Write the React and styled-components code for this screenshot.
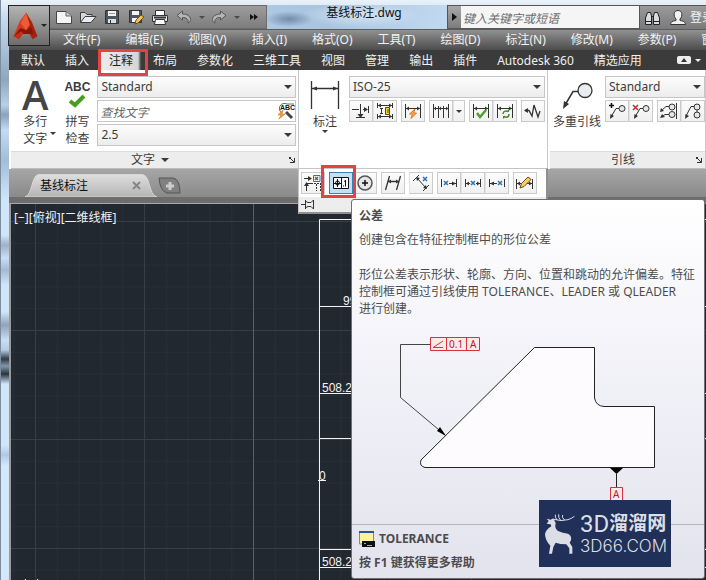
import React from "react";
import styled, { createGlobalStyle } from "styled-components";

const GlobalStyle = createGlobalStyle`
	* {
		box-sizing: border-box;
	}
	body {
		margin: 0;
		font-family: "Noto Sans", "Noto Sans CJK SC", sans-serif;
		font-size: 12px;
		line-height: 16px;
		color: #3c3c3c;
	}
	button, input, select {
		font: inherit;
		color: inherit;
		margin: 0;
		padding: 0;
		border: 0;
		background: none;
	}
	svg {
		display: block;
		flex: none;
	}
`;

const Frame = styled.div`
	position: relative;
	display: flex;
	flex-direction: column;
	min-height: 100vh;
	overflow: hidden;
	padding: 5px 0 0 8px;
	border-left: 1px solid #7d8da0;
	background: linear-gradient(
		#e9f2f9 0, #c3d9ec 20px, #8fa6bd 80px, #b9d0e6 105px, #8ba3bb 115px,
		#c4dcf2 130px, #a3bdd8 160px, #cfe5fa 200px, #cfe5fa 235px, #9eb2c8 245px,
		#c8def4 258px, #a5bad2 270px, #cfe5fa 285px, #cfe5fa 312px, #8fa3b9 325px,
		#c8def4 340px, #b4cbe2 350px, #2f3946 359px, #8496aa 366px, #2a333e 374px,
		#cfe5fa 384px, #cfe5fa 445px, #b0c9e3 455px, #d4e8fb 466px, #d4e8fb 100%
	);
`;

/* title bar */

const AppButton = styled.button`
	position: absolute;
	top: 5px;
	left: 7px;
	z-index: 2;
	display: flex;
	align-items: center;
	gap: 3px;
	width: 42px;
	height: 41px;
	padding-left: 4px;
	border: 1px solid #222;
	background: linear-gradient(#b4b4b4, #6d6d6d);
`;

const TitleBar = styled.header`
	display: flex;
	height: 24px;
	padding-left: 41px;
	background: linear-gradient(90deg, #c5dcf1 0, #a9c4e0 45%, #c4dcf2 65%, #cfe3f5 100%);
`;

const QuickAccess = styled.div`
	display: flex;
	align-items: center;
	padding: 0 0 0 2px;
	border: 1px solid #6b6b6b;
	border-left: 0;
	background: linear-gradient(#9d9d9d, #7c7c7c);
`;

const QuickButton = styled.button`
	display: flex;
	align-items: center;
	justify-content: center;
	width: ${(p) => (p.$narrow ? 11 : 24)}px;
	height: 20px;
`;

const DocTitle = styled.h1`
	flex: 180 1 0;
	margin: 0;
	padding-left: 14px;
	font-size: 12px;
	font-weight: 400;
	line-height: 16px;
	text-align: center;
	color: #111;
	white-space: nowrap;
	background:
		radial-gradient(ellipse 24px 8px at 22px 14px, rgba(70, 90, 115, 0.55), transparent),
		radial-gradient(ellipse 60px 12px at 52% 10px, rgba(225, 238, 250, 0.7), transparent);
`;

const SearchBox = styled.div`
	flex: 193 1 0;
	display: flex;
	border: 1px solid #565656;
`;

const SearchToggle = styled.button`
	display: flex;
	align-items: center;
	justify-content: center;
	width: 13px;
	background: linear-gradient(#a8a8a8, #7c7c7c);
`;

const SearchInput = styled.input`
	flex: 1;
	min-width: 0;
	padding: 3px 2px 0;
	background: #f5f5f5;
	font-style: italic;
	&::placeholder {
		color: #6c6c6c;
		opacity: 1;
	}
`;

const Account = styled.div`
	flex: 0 0 66px;
	display: flex;
	align-items: center;
	gap: 8px;
	padding-left: 4px;
	overflow: hidden;
	color: #f4f4f4;
	white-space: nowrap;
	background: linear-gradient(#9a9a9a, #7a7a7a);
	border-top: 1px solid #565656;
`;

const AccountButton = styled.button`
	display: flex;
	align-items: center;
	flex: none;
	gap: 3px;
`;

/* menu and ribbon tabs */

const MenuBar = styled.nav`
	display: flex;
	gap: 25px;
	height: 21px;
	padding-left: 54px;
	overflow: hidden;
	border-top: 1px solid #5c5c5c;
	background: linear-gradient(#919191, #4c4c4c);
`;

const MenuItem = styled.button`
	flex: none;
	color: #f1f1f1;
	white-space: nowrap;
`;

const TabBar = styled.nav`
	display: flex;
	align-items: stretch;
	height: 20px;
	padding-left: 2px;
	background: #3b3b3b;
`;

const RibbonTab = styled.button`
	position: relative;
	flex: none;
	padding: 2px 10px 0;
	color: ${(p) => (p.$active ? "#222" : "#f1f1f1")};
	background: ${(p) => (p.$active ? "linear-gradient(90deg, transparent 2px, #ececec 2px, #d5d5d5 39px, #3b3b3b 42px)" : "none")};
	white-space: nowrap;
`;

const Marker = styled.span`
	position: absolute;
	inset: ${(p) => p.$inset};
	z-index: 3;
	border: 3px solid #e04545;
	pointer-events: none;
`;

const TabToggle = styled.button`
	display: flex;
	align-items: center;
	gap: 4px;
	margin: 0 5px 0 auto;
`;

/* ribbon panels */

const Ribbon = styled.main`
	display: grid;
	grid-template-columns: 290fr 249fr 158fr;
	min-height: 98px;
	background: #fff;
`;

const Panel = styled.section`
	position: relative;
	display: flex;
	flex-direction: column;
	min-width: 0;
	border-right: 1px solid #c9c9c9;
`;

const PanelBody = styled.div`
	flex: 1;
	display: flex;
	padding: 6px ${(p) => p.$right ?? 2}px 4px ${(p) => p.$left}px;
	gap: ${(p) => p.$gap}px;
`;

const PanelTitle = styled.footer`
	display: flex;
	align-items: center;
	justify-content: center;
	height: 18px;
	margin-left: 2px;
	border-top: 1px solid #dcdcdc;
	border-bottom: 1px solid #bdbdbd;
	background: #ededed;
`;

const TitleText = styled.button`
	display: flex;
	align-items: center;
	gap: 6px;
	margin: 0 auto;
`;

const Launcher = styled.button`
	padding-right: 3px;
`;

const BigButtons = styled.div`
	display: flex;
	gap: 16px;
`;

const BigButton = styled.button`
	display: flex;
	flex-direction: column;
	align-items: center;
	align-self: flex-start;
	flex: none;
	line-height: 17px;
	white-space: nowrap;
`;

const BigIcon = styled.span`
	display: flex;
	flex-direction: column;
	align-items: center;
	justify-content: center;
	height: 37px;
`;

const BigLetter = styled.span`
	font-family: "Open Sans", sans-serif;
	font-size: 40px;
	font-weight: 600;
	line-height: 36px;
	color: #454545;
`;

const Abc = styled.span`
	font-family: "Liberation Sans", Arial, sans-serif;
	font-size: 12px;
	font-weight: 700;
	line-height: 12px;
`;

const LabelRow = styled.span`
	position: relative;
`;

const CornerArrow = styled.span`
	position: absolute;
	left: 100%;
	top: 2px;
	padding-left: 3px;
`;

const Fields = styled.div`
	flex: 1;
	min-width: 0;
	display: flex;
	flex-direction: column;
	gap: 2px;
`;

const Field = styled.label`
	position: relative;
	display: flex;
	align-items: center;
	height: 22px;
	border: 1px solid #c6c6c6;
	background: ${(p) => (p.$plain ? "#fff" : "linear-gradient(#fdfdfd, #ececec)")};
`;

const Select = styled.select`
	flex: 1;
	min-width: 0;
	height: 20px;
	padding: 0 20px 0 3px;
	appearance: none;
`;

const TextInput = styled.input`
	flex: 1;
	min-width: 0;
	padding: 3px 2px 0;
	font-style: italic;
	&::placeholder {
		color: #666;
		opacity: 1;
	}
`;

const FieldArrow = styled.span`
	position: absolute;
	right: 3px;
	pointer-events: none;
`;

const ToolRow = styled.div`
	display: flex;
	gap: 4px;
`;

const ToolGroup = styled.div`
	display: flex;
`;

const Tool = styled.button`
	position: relative;
	display: flex;
	align-items: center;
	justify-content: center;
	width: ${(p) => (p.$narrow ? 12 : 24)}px;
	height: 22px;
	border: 1px solid ${(p) => (p.$active ? "#3a7fb5" : "#cbcbcb")};
	background: ${(p) => (p.$active ? "#c3e0f5" : "linear-gradient(#fcfcfc, #f0f0f0)")};
	& + & {
		border-left-color: #e2e2e2;
	}
`;

const Flyout = styled.div`
	position: absolute;
	top: 98px;
	left: -1px;
	right: -1px;
	z-index: 2;
	border: 1px solid #c4c4c4;
	border-right: 2px solid #8f8f8f;
	border-bottom: 2px solid #8f8f8f;
	background: #fff;
`;

const FlyoutTools = styled(ToolRow)`
	padding: 3px 2px;
`;

const FlyoutFoot = styled.div`
	height: 15px;
	padding: 1px 2px;
	background: #ededed;
`;

/* document tabs */

const FileBar = styled.div`
	display: flex;
	align-items: flex-end;
	height: 34px;
	padding-left: 16px;
	border-bottom: 6px solid #6d6d6d;
	background: linear-gradient(#a6a6a6, #8a8a8a);
`;

const FileTab = styled.div`
	position: relative;
	display: flex;
	align-items: center;
	justify-content: space-between;
	width: 132px;
	height: 23px;
	padding: 0 16px 0 15px;
	color: #111;
`;

const TabShape = styled.svg`
	position: absolute;
	inset: 0;
`;

const TabContent = styled.button`
	position: relative;
`;

const NewTab = styled.button`
	margin: 0 0 2px 1px;
`;

/* drawing area */

const Canvas = styled.section`
	position: relative;
	flex: 1;
	border-top: 1px solid #a8a8a8;
	border-left: 2px solid #9a9a9a;
	background: #212830;
`;

const Drawing = styled.svg`
	position: absolute;
	inset: 0;
	font-family: "Liberation Sans", Arial, sans-serif;
	font-size: 12px;
`;

const ViewLabel = styled.div`
	position: relative;
	padding: 6px 3px;
	color: #f2f2f2;
`;

/* tooltip */

const Tip = styled.aside`
	position: absolute;
	top: 30px;
	left: 52px;
	z-index: 4;
	width: 354px;
	border: 1px solid #6f6f76;
	border-radius: 3px;
	background: linear-gradient(#fff, #f3f3f9 40%, #e3e3ee);
	color: #4c4c4c;
`;

const TipText = styled.div`
	padding: 7px 7px 0;
`;

const TipTitle = styled.h2`
	margin: 0 0 7px;
	font-size: 12px;
	line-height: 17px;
`;

const TipLine = styled.p`
	margin: 0 0 18px;
	line-height: 17px;
	&:last-child {
		margin: 0;
	}
`;

const NoWrap = styled.span`
	white-space: nowrap;
`;

const TipFigure = styled.svg`
	margin: 9px 0 0 38px;
	font-size: 10px;
`;

const TipFoot = styled.footer`
	margin-top: 23px;
	padding: 5px 7px 7px;
	border-top: 1px solid #b5b5c2;
	font-weight: 700;
`;

const Command = styled.div`
	display: flex;
	align-items: center;
	gap: 4px;
	margin-bottom: 7px;
	line-height: 18px;
`;

const Watermark = styled.div`
	position: absolute;
	right: 33px;
	bottom: 11px;
	display: flex;
	align-items: center;
	gap: 4px;
	width: 132px;
	height: 67px;
	padding-left: 5px;
	background: #203058;
	color: #dcdee6;
	white-space: nowrap;
`;

const MarkTop = styled.div`
	display: flex;
	align-items: center;
	font-family: Roboto, "Noto Sans CJK SC", sans-serif;
	font-size: 24px;
	line-height: 24px;
`;

const MarkHan = styled.span`
	font-size: 19px;
	font-weight: 700;
`;

const MarkSite = styled.div`
	font-family: Inter, "Liberation Sans", sans-serif;
	font-size: 17px;
	font-weight: 300;
	line-height: 20px;
`;

const menus = ["文件(F)", "编辑(E)", "视图(V)", "插入(I)", "格式(O)", "工具(T)", "绘图(D)", "标注(N)", "修改(M)", "参数(P)", "窗口(W)"];
const tabs = ["默认", "插入", "注释", "布局", "参数化", "三维工具", "视图", "管理", "输出", "插件", "Autodesk 360", "精选应用"];

const Down = ({ size = 8, color = "#3a3a3a" }) => (
	<svg width={size} height={size / 2} viewBox="0 0 8 4">
		<path d="M0 0H8L4 4Z" fill={color} />
	</svg>
);

const Glyph = ({ w = 20, h = 18, children }) => (
	<svg width={w} height={h} viewBox={`0 0 ${w} ${h}`} fill="none" stroke="#333" strokeWidth="1">
		{children}
	</svg>
);

const LauncherIcon = () => (
	<Glyph w={6} h={6}>
		<path d="M0 0.5H2M0.5 0V2M1 1L5 5M5.5 1V5.5H1" />
	</Glyph>
);

const quick = {
	new: (
		<Glyph>
			<path d="M2.500 3.500H12L17.500 8V15.500H2.500Z" fill="#f4f4f4" stroke="#444" />
			<path d="M12 3.500V8H17.500" fill="#ccc" stroke="#666" />
		</Glyph>
	),
	open: (
		<Glyph>
			<path d="M2.500 14.500V4.500H7L9 6.500H14V8.500" fill="#d8d8d8" stroke="#3d3d3d" />
			<path d="M2.500 14.500L7 8.500H18L13 14.500Z" fill="#e8edf3" stroke="#3d3d3d" />
		</Glyph>
	),
	save: (
		<Glyph>
			<path d="M3.500 2.500H16.500V15.500H3.500Z" fill="#4d5660" stroke="#2f353b" />
			<path d="M6 3H14V8H6Z" fill="#f4f4f4" stroke="none" />
			<path d="M7 5.500H13" stroke="#999" />
			<path d="M6 11H14V15H6Z" fill="#ddd" stroke="none" />
			<path d="M8.500 12V15" />
		</Glyph>
	),
	saveAs: (
		<Glyph>
			<path d="M3.500 2.500H15.500V14.500H3.500Z" fill="#4d5660" stroke="#2f353b" />
			<path d="M6 3H13V7H6ZM6 10H12V14H6Z" fill="#f4f4f4" stroke="none" />
			<path d="M9 16L10 12L15 7L18 9L12 15Z" fill="#f0c25a" stroke="#7a4d12" />
		</Glyph>
	),
	print: (
		<Glyph>
			<path d="M5.500 2.500H14.500V8H5.500Z" fill="#fff" />
			<path d="M2.500 7.500H17.500V13.500H2.500Z" fill="#e2e2e2" />
			<path d="M5.500 11.500H14.500L15.500 16.500H4.500Z" fill="#fff" />
			<path d="M4 9.500H16" strokeWidth="2" />
		</Glyph>
	),
	undo: (
		<Glyph>
			<path d="M3 7.500L8.500 3V6C13 6 16.500 8 16.500 11.500C16.500 13 15.500 14.500 14 15C15 11 12 9.500 8.500 9.500V12Z" fill="#b5b5b5" stroke="#555" />
		</Glyph>
	),
	redo: (
		<Glyph>
			<path d="M17 7.500L11.500 3V6C7 6 3.500 8 3.500 11.500C3.500 13 4.500 14.500 6 15C5 11 8 9.500 11.500 9.500V12Z" fill="#b5b5b5" stroke="#555" />
		</Glyph>
	),
	more: (
		<Glyph w={10} h={8}>
			<path d="M1 1L5 4L1 7ZM5 1L9 4L5 7Z" fill="#111" stroke="none" />
		</Glyph>
	),
};

// a dimension bar: two end ticks and a line with arrow heads
const Bar = ({ x1 = 2, x2 = 17, y = 6, top = 2, bottom = 16 }) => (
	<>
		<path d={`M${x1 + 0.5} ${top}V${bottom}M${x2 + 0.5} ${top}V${bottom}M${x1} ${y + 0.5}H${x2}`} />
		<path d={`M${x1 + 1} ${y + 0.5}l3-2v4zM${x2} ${y + 0.5}l-3-2v4z`} fill="#333" stroke="none" />
	</>
);

const Cross = ({ x, y, s = 5, color = "#2f74b5" }) => (
	<path d={`M${x} ${y}l${s} ${s}M${x + s} ${y}l${-s} ${s}`} stroke={color} strokeWidth="1.500" />
);

const tool = {
	break: (
		<Glyph>
			<path d="M1 7.500H8M12 7.500H16M17.500 4V11M9.500 2V15M5 15.500H14" />
			<path d="M17 7.500L13 5V10ZM9.500 16L6.500 12H12.500Z" fill="#333" stroke="none" />
		</Glyph>
	),
	space: (
		<Glyph>
			<Bar x1={2} x2={17} y={3} top={1} bottom={6} />
			<Bar x1={2} x2={17} y={14} top={12} bottom={17} />
			<path d="M6.500 6V12M5 6.500H8M5 11.500H8" />
			<path d="M10.500 5.500H14.500V12.500H10.500Z" fill="#f5d33a" stroke="#5e4c00" />
			<path d="M12 8H14M12 10H14" stroke="#5e4c00" />
		</Glyph>
	),
	quick: (
		<Glyph>
			<Bar />
			<path d="M12 7L6.500 12H9.500L8 16.500L13.500 11H10.500Z" fill="#f7b35a" stroke="#d9780f" />
		</Glyph>
	),
	cont: (
		<Glyph>
			<path d="M2.500 2V16M7.500 4V16M12.500 4V16M17.500 2V16M2 6.500H18" />
			<path d="M3 6.500l2-2v4zM8 6.500l2-2v4zM17 6.500l-2-2v4z" fill="#333" stroke="none" />
		</Glyph>
	),
	check: (
		<Glyph>
			<Bar />
			<path d="M6 11L9 15L15 8" stroke="#4ca32a" strokeWidth="2.500" />
		</Glyph>
	),
	update: (
		<Glyph>
			<Bar />
			<path d="M8 12C8 9 12 8 13 10M14 12C14 16 10 16 9 14" stroke="#3f8f25" strokeWidth="1.500" />
			<path d="M11 10H14V7ZM11 14H8V17Z" fill="#3f8f25" stroke="none" />
		</Glyph>
	),
	jog: (
		<Glyph>
			<path d="M2 8.500H6L9 14L11 3L15 15L17 9" strokeWidth="1.300" />
			<path d="M1 8.500L5 6V11Z" fill="#333" stroke="none" />
		</Glyph>
	),
	addLeader: (
		<Glyph>
			<path d="M2 3.500H7M4.500 1V6" stroke="#111" strokeWidth="1.500" />
			<path d="M12 6.500H9L4 15" />
			<path d="M3 17L3.500 12L7 14Z" fill="#333" stroke="none" />
			<circle cx="15" cy="6.500" r="3" fill="#e6e6e6" />
		</Glyph>
	),
	removeLeader: (
		<Glyph>
			<Cross x={2} y={3} color="#cc2a2a" />
			<path d="M12 6.500H9L4 15" />
			<path d="M3 17L3.500 12L7 14Z" fill="#333" stroke="none" />
			<circle cx="15" cy="6.500" r="3" fill="#e6e6e6" />
		</Glyph>
	),
	alignLeader: (
		<Glyph>
			<path d="M10 4.500H7L2 9M10 12.500H6L3 15M17.500 1V17" />
			<path d="M1 10L2 6L5 9ZM1 16L3 12L6 15Z" fill="#333" stroke="none" />
			<circle cx="13" cy="5" r="3" fill="#e6e6e6" />
			<circle cx="13" cy="12.500" r="3" fill="#e6e6e6" />
		</Glyph>
	),
	collectLeader: (
		<Glyph>
			<path d="M11 4.500H8L3 14" />
			<path d="M2 17L2.500 12L6 14Z" fill="#333" stroke="none" />
			<circle cx="14" cy="5" r="3" fill="#e6e6e6" />
			<circle cx="14" cy="13" r="3" fill="#e6e6e6" />
			<path d="M14 8V10" />
		</Glyph>
	),
	ordinate: (
		<Glyph>
			<path d="M1 4.500H8M3.500 17V9.500H8" />
			<path d="M9 4.500L5 2V7ZM3.500 8L1 12H6Z" fill="#333" stroke="none" />
			<path d="M10.500 1.500H17V7.500H10.500Z" stroke="#2f74b5" />
			<Cross x={12} y={3} s={3} />
			<path d="M8 9.500H16M13.500 10V17M17.500 9V17" strokeDasharray="2 1" />
		</Glyph>
	),
	tolerance: (
		<Glyph>
			<path d="M2.500 3.500H17.500V14.500H2.500ZM10.500 3.500V14.500" fill="#f8fcff" stroke="#111" />
			<circle cx="6.500" cy="9" r="2" stroke="#111" />
			<path d="M3 9.500H10M6.500 5V13M14.500 6V12.500M13 7.500L14.500 6.500M12.500 11.500V12.500" stroke="#111" />
		</Glyph>
	),
	center: (
		<Glyph>
			<circle cx="10" cy="9" r="7" fill="#e6e6e6" stroke="#555" strokeWidth="1.500" />
			<path d="M7 9H13M10 6V12" stroke="#111" strokeWidth="1.500" />
		</Glyph>
	),
	oblique: (
		<Glyph>
			<path d="M6.500 2L2.500 16M17.500 2L13.500 16M5 7.500H16" strokeWidth="1.300" />
			<path d="M5 7.500l3-2v4zM16 7.500l-3-2v4z" fill="#333" stroke="none" />
		</Glyph>
	),
	angle: (
		<Glyph>
			<path d="M6 4L15 14M2 7L8 1M12 17L18 11" />
			<path d="M5 3L9 4L6 7ZM16 15L12 14L15 11Z" fill="#333" stroke="none" />
			<Cross x={12} y={3} s={4} />
		</Glyph>
	),
	left: (
		<Glyph>
			<path d="M2.500 5V13M17.500 5V13M10 9.500H17" />
			<path d="M17 9.500l-4-2v4z" fill="#333" stroke="none" />
			<Cross x={5} y={7} s={4} />
		</Glyph>
	),
	middle: (
		<Glyph>
			<path d="M2.500 5V13M17.500 5V13M3 9.500H7M13 9.500H17" />
			<path d="M3 9.500l3-2v4zM17 9.500l-3-2v4z" fill="#333" stroke="none" />
			<Cross x={8} y={7} s={4} />
		</Glyph>
	),
	right: (
		<Glyph>
			<path d="M2.500 5V13M17.500 5V13M3 9.500H10" />
			<path d="M3 9.500l4-2v4z" fill="#333" stroke="none" />
			<Cross x={11} y={7} s={4} />
		</Glyph>
	),
	override: (
		<Glyph>
			<Bar x1={1} x2={17} y={9} top={5} bottom={15} />
			<path d="M5 14L6.500 9.500L13 3L16 5.500L9 12.500Z" fill="#f4cf6a" stroke="#6b4510" />
		</Glyph>
	),
};

const ToolButton = ({ name, label, ...rest }) => (
	<Tool aria-label={label} {...rest}>
		{tool[name]}
		{rest.$active && <Marker $inset="-8px -4px -5px -9px" />}
	</Tool>
);

const Combo = ({ label, value }) => (
	<Field>
		<Select aria-label={label} defaultValue={value}>
			<option>{value}</option>
		</Select>
		<FieldArrow>
			<Down />
		</FieldArrow>
	</Field>
);

const Deer = () => (
	<svg width="32" height="42" viewBox="578 558 96 126" fill="#dcdee6">
		<path d="M586 590L592 582L586 575L598 578L606 574L613 588Q609 605 620 612Q634 618 650 620Q662 626 659 640L655 647L663 660L663 680H654L654 664L645 652Q626 652 613 647L606 660L602 680H593L597 656Q582 642 581 622Q583 608 600 598L598 592Z" />
		<path d="M607 577Q630 584 650 578Q662 574 669 568M617 579Q610 570 612 563M628 580Q620 572 622 562M640 579Q630 572 634 564" fill="none" stroke="#dcdee6" strokeWidth="3" />
	</svg>
);

function TextPanel() {
	return (
		<Panel>
			<PanelBody $left={13} $gap={7}>
				<BigButtons>
					<BigButton>
						<BigIcon>
							<BigLetter>A</BigLetter>
						</BigIcon>
						<span>多行</span>
						<LabelRow>
							文字
							<CornerArrow>
								<Down size={6} />
							</CornerArrow>
						</LabelRow>
					</BigButton>
					<BigButton>
						<BigIcon>
							<Abc>ABC</Abc>
							<svg width="18" height="15" viewBox="0 0 18 15">
								<path d="M2 8L7 12L16 3" fill="none" stroke="#45a01f" strokeWidth="4" />
							</svg>
						</BigIcon>
						<span>拼写</span>
						<span>检查</span>
					</BigButton>
				</BigButtons>
				<Fields>
					<Combo label="文字样式" value="Standard" />
					<Field $plain>
						<TextInput aria-label="查找文字" placeholder="查找文字" />
						<svg width="18" height="20" viewBox="0 0 18 20">
							<path d="M5 12A5 5 0 1 1 10 3H17" fill="none" stroke="#557069" />
							<path d="M9 11L15 17" stroke="#444" strokeWidth="3" />
							<path d="M6 9L1 14H4L2 18L8 13H5Z" fill="#f0a030" stroke="#c9690f" strokeWidth="0.500" />
							<text x="3" y="9" fontFamily="Liberation Sans" fontSize="7" fontWeight="700" fill="#111">ABC</text>
						</svg>
					</Field>
					<Combo label="文字高度" value="2.5" />
				</Fields>
			</PanelBody>
			<PanelTitle>
				<TitleText>
					文字 <Down />
				</TitleText>
				<Launcher aria-label="文字样式管理">
					<LauncherIcon />
				</Launcher>
			</PanelTitle>
		</Panel>
	);
}

function Tooltip() {
	return (
		<Tip role="tooltip">
			<TipText>
				<TipTitle>公差</TipTitle>
				<TipLine>创建包含在特征控制框中的形位公差</TipLine>
				<TipLine>
					形位公差表示形状、轮廓、方向、位置和跳动的允许偏差。特征控制框可通过引线使用 TOLERANCE、LEADER 或 QLEADER <NoWrap>进行创建。</NoWrap>
				</TipLine>
			</TipText>
			<TipFigure width="275" height="175" viewBox="390 326 275 175" fill="none" stroke="#222">
				<path d="M534.500 347.500H594.500V398Q596 406 604 406.500H654.500V467.500H425Q419 466 421 460Z" fill="#fefbfe" />
				<path d="M430 344.500H400.500V397.500L445 435" stroke="#444" />
				<path d="M446 436L437 431L440 427Z" fill="#000" stroke="none" />
				<g stroke="#d8323f" fill="#fde8ea">
					<path d="M430.500 337.500H479.500V350.500H430.500ZM446.500 337.500V350.500M466.500 337.500V350.500" />
					<path d="M443 347.500H433L443 341" fill="none" />
					<path d="M610.500 487.500H622.500V500.500H610.500Z" />
				</g>
				<path d="M610 468H623L616.500 474Z" fill="#000" stroke="none" />
				<path d="M616.500 474V487" />
				<g fill="#b3202c" stroke="none">
					<text x="449" y="348">0.1</text>
					<text x="470" y="348">A</text>
					<text x="613" y="498">A</text>
				</g>
			</TipFigure>
			<TipFoot>
				<Command>
					<svg width="16" height="17" viewBox="0 0 16 17">
						<path d="M0.500 0.500H14.500V13H0.500Z" fill="#f8f49a" stroke="#7a86b0" />
						<path d="M0 0H15V2H0Z" fill="#2c4fa0" />
						<path d="M3 10H16V16H3Z" fill="#111" />
						<path d="M5 12.500H7M8 14.500H13" stroke="#aaa" />
					</svg>
					TOLERANCE
				</Command>
				<div>按 F1 键获得更多帮助</div>
			</TipFoot>
			<Watermark>
				<Deer />
				<div>
					<MarkTop>
						3D<MarkHan>溜溜网</MarkHan>
					</MarkTop>
					<MarkSite>3D66.COM</MarkSite>
				</div>
			</Watermark>
		</Tip>
	);
}

function DimensionPanel() {
	return (
		<Panel>
			<PanelBody $left={11} $gap={9}>
				<BigButton>
					<BigIcon>
						<Glyph w={30} h={32}>
							<path d="M1.500 2V30M28.500 2V30M2 9.500H28" strokeWidth="1.300" />
							<path d="M2 9.500l5-2v4zM28 9.500l-5-2v4z" fill="#333" stroke="none" />
						</Glyph>
					</BigIcon>
					<span>标注</span>
					<Down size={6} />
				</BigButton>
				<Fields>
					<Combo label="标注样式" value="ISO-25" />
					<ToolRow>
						<ToolGroup>
							<ToolButton name="break" label="打断" />
							<ToolButton name="space" label="调整间距" />
						</ToolGroup>
						<ToolButton name="quick" label="快速标注" />
						<ToolGroup>
							<ToolButton name="cont" label="连续" />
							<Tool $narrow aria-label="连续选项">
								<Down size={6} />
							</Tool>
						</ToolGroup>
						<ToolGroup>
							<ToolButton name="check" label="检验" />
							<ToolButton name="update" label="更新" />
						</ToolGroup>
						<ToolButton name="jog" label="折弯标注" />
					</ToolRow>
				</Fields>
			</PanelBody>
			<Flyout>
				<FlyoutTools>
					<ToolButton name="ordinate" label="重新关联" />
					<ToolGroup>
						<ToolButton name="tolerance" label="公差" $active />
						<ToolButton name="center" label="圆心标记" />
					</ToolGroup>
					<ToolButton name="oblique" label="倾斜" />
					<ToolButton name="angle" label="文字角度" />
					<ToolGroup>
						<ToolButton name="left" label="左对正" />
						<ToolButton name="middle" label="居中对正" />
						<ToolButton name="right" label="右对正" />
					</ToolGroup>
					<ToolButton name="override" label="替代" />
				</FlyoutTools>
				<FlyoutFoot>
					<Glyph w={14} h={12}>
						<path d="M0 6.500H4M4.500 2V11M5 3.500L7 4.500H10L12.500 2V11L10 8.500H7L5 9.500" />
					</Glyph>
				</FlyoutFoot>
				<Tooltip />
			</Flyout>
		</Panel>
	);
}

function LeaderPanel() {
	return (
		<Panel>
			<PanelBody $left={5} $gap={4} $right={0}>
				<BigButton>
					<BigIcon>
						<Glyph w={32} h={30}>
							<path d="M18 11.500H12L4 25" strokeWidth="1.500" />
							<path d="M2 29L3 21L8 24Z" fill="#333" stroke="none" />
							<circle cx="24" cy="10.500" r="7" fill="#e9edf1" strokeWidth="1.300" />
						</Glyph>
					</BigIcon>
					<span>多重引线</span>
				</BigButton>
				<Fields>
					<Combo label="引线样式" value="Standard" />
					<ToolRow>
						<ToolGroup>
							<ToolButton name="addLeader" label="添加引线" />
							<ToolButton name="removeLeader" label="删除引线" />
						</ToolGroup>
						<ToolGroup>
							<ToolButton name="alignLeader" label="对齐" />
							<ToolButton name="collectLeader" label="合并" />
						</ToolGroup>
					</ToolRow>
				</Fields>
			</PanelBody>
			<PanelTitle>
				<TitleText>引线</TitleText>
				<Launcher aria-label="引线样式管理">
					<LauncherIcon />
				</Launcher>
			</PanelTitle>
		</Panel>
	);
}

export default function App() {
	return (
		<>
			<GlobalStyle />
			<Frame>
				<AppButton aria-label="应用程序菜单">
					<svg width="25" height="28" viewBox="36 24 74 84">
						<path d="M75 26L56 52L37 97L54 106L66 88L75 70Z" fill="#d8391f" />
						<path d="M75 26L92 54L109 97L94 106L84 88L72 64Z" fill="#a8200f" />
						<path d="M75 26L86 62L75 78L58 58Z" fill="#ee5a38" />
						<path d="M58 72L75 78L92 70L96 90H56L37 97Z" fill="#8a150b" />
						<path d="M37 97L54 106L66 88L60 82Z" fill="#c22f1a" />
					</svg>
					<Down size={6} color="#222" />
				</AppButton>
				<TitleBar>
					<QuickAccess>
						<QuickButton aria-label="新建">{quick.new}</QuickButton>
						<QuickButton aria-label="打开">{quick.open}</QuickButton>
						<QuickButton aria-label="保存">{quick.save}</QuickButton>
						<QuickButton aria-label="另存为">{quick.saveAs}</QuickButton>
						<QuickButton aria-label="打印">{quick.print}</QuickButton>
						<QuickButton aria-label="放弃">{quick.undo}</QuickButton>
						<QuickButton $narrow aria-label="放弃列表">
							<Down size={6} color="#4a4a4a" />
						</QuickButton>
						<QuickButton aria-label="重做">{quick.redo}</QuickButton>
						<QuickButton $narrow aria-label="重做列表">
							<Down size={6} color="#4a4a4a" />
						</QuickButton>
						<QuickButton aria-label="更多">{quick.more}</QuickButton>
					</QuickAccess>
					<DocTitle>基线标注.dwg</DocTitle>
					<SearchBox>
						<SearchToggle aria-label="展开搜索">
							<svg width="5" height="8" viewBox="0 0 5 8">
								<path d="M0 0L5 4L0 8Z" fill="#111" />
							</svg>
						</SearchToggle>
						<SearchInput aria-label="搜索" placeholder="键入关键字或短语" />
					</SearchBox>
					<Account>
						<AccountButton aria-label="搜索帮助">
							<svg width="17" height="16" viewBox="0 0 17 16" fill="#d9dde2" stroke="#222">
								<path d="M3.500 2.500H6.500L7.500 6V14.500H1.500V8ZM13.500 2.500H10.500L9.500 6V14.500H15.500V8Z" />
								<path d="M7 6.500H10M2 11.500H7M10 11.500H15" />
							</svg>
						</AccountButton>
						<AccountButton>
							<svg width="18" height="17" viewBox="0 0 18 17" fill="#f1f1f1" stroke="#333">
								<path d="M1.500 15.500C2 12 5 12 7 11.500V10C4 7 4.500 1.500 9 1.500S14 7 11 10V11.500C13 12 16 12 16.500 15.500Z" />
							</svg>
							登录
						</AccountButton>
					</Account>
				</TitleBar>
				<MenuBar>
					{menus.map((m) => (
						<MenuItem key={m}>{m}</MenuItem>
					))}
				</MenuBar>
				<TabBar>
					{tabs.map((t) => (
						<RibbonTab key={t} $active={t === "注释"}>
							{t}
							{t === "注释" && <Marker $inset="-1px -5px -6px -1px" />}
						</RibbonTab>
					))}
					<TabToggle aria-label="最小化功能区">
						<svg width="14" height="8" viewBox="0 0 14 8">
							<rect width="14" height="8" rx="2" fill="#eee" />
							<path d="M4 6L7 2L10 6Z" fill="#333" />
						</svg>
						<Down size={6} color="#eee" />
					</TabToggle>
				</TabBar>
				<Ribbon>
					<TextPanel />
					<DimensionPanel />
					<LeaderPanel />
				</Ribbon>
				<FileBar>
					<FileTab>
						<TabShape width="132" height="23" viewBox="0 0 132 23">
							<defs>
								<linearGradient id="tab" x2="0" y2="1">
									<stop offset="0" stopColor="#dedede" />
									<stop offset="1" stopColor="#b4b4b4" />
								</linearGradient>
							</defs>
							<path d="M0 23C8 21 6 1 14 0.500H117C126 1 123 21 132 23Z" fill="url(#tab)" stroke="#d9d9d9" />
						</TabShape>
						<TabContent>基线标注</TabContent>
						<TabContent aria-label="关闭">
							<Glyph w={9} h={9}>
								<path d="M1 1L8 8M8 1L1 8" stroke="#858585" strokeWidth="2" />
							</Glyph>
						</TabContent>
					</FileTab>
					<NewTab aria-label="新图形">
						<svg width="24" height="18" viewBox="0 0 24 18">
							<path d="M1 1H15Q22 2 22 16H9Q2 14 1 1Z" fill="#808080" stroke="#555" />
							<path d="M8 9H16M12 5V13" stroke="#ccc" strokeWidth="3" />
						</svg>
					</NewTab>
				</FileBar>
				<Canvas>
					<Drawing width="100%" height="100%">
						<defs>
							<pattern id="minor" x="24" y="17" width="21.800" height="21.800" patternUnits="userSpaceOnUse">
								<path d="M0.500 0V22M0 0.500H22" stroke="#272e37" fill="none" />
							</pattern>
							<pattern id="major" x="24" y="17" width="109" height="109" patternUnits="userSpaceOnUse">
								<path d="M0.500 0V109M0 0.500H109" stroke="#363e48" fill="none" />
							</pattern>
						</defs>
						<rect width="100%" height="100%" fill="url(#minor)" />
						<rect width="100%" height="100%" fill="url(#major)" />
						<path d="M242.500 0V1000" stroke="#2f7d38" />
						<path d="M308.500 1000V15.500H700M308 102.500H700M308 189.500H700M308 234.500H700M308 345.500H700M308 363.500H700M307 276.500H315" stroke="#f4f4f4" fill="none" />
						<path d="M14 375L17 379M27 375L24 379" stroke="#f4f4f4" />
						<g fill="#f4f4f4">
							<text x="332" y="101">99</text>
							<text x="311" y="188">508.2</text>
							<text x="308" y="276">0</text>
							<text x="311" y="362">508.2</text>
						</g>
					</Drawing>
					<ViewLabel>[−][俯视][二维线框]</ViewLabel>
				</Canvas>
			</Frame>
		</>
	);
}
